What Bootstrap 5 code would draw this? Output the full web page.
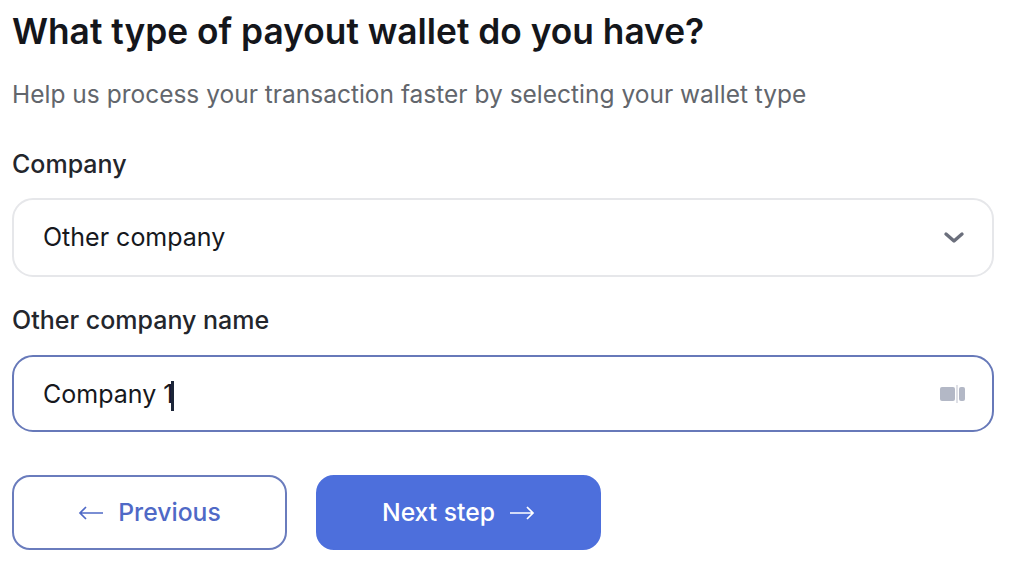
<!DOCTYPE html>
<html lang="en">
<head>
<meta charset="utf-8">
<title>Payout wallet</title>
<link href="https://cdn.jsdelivr.net/npm/bootstrap@5.3.0/dist/css/bootstrap.min.css" rel="stylesheet">
<style>
html,body{height:100%;overflow:hidden}
body{font-family:Inter,"Liberation Sans",sans-serif;background:#fff;color:#15171c}
.pagewrap{padding:11px 30px 0 12px}
.ttl{font-size:35.3px;line-height:42px;font-weight:600;color:#14161b;margin:0}
.sub{font-size:24.5px;line-height:32px;color:#62666c;margin:25px 0 0;font-weight:400}
.fld{font-size:25px;line-height:32px;font-weight:500;color:#23262c;margin:0}
.lab1{margin-top:38px}
.lab2{margin-top:27px}
.boxa,.boxb{background:#fff;border-radius:21px;padding:0 27px 0 29px;font-size:25px;color:#16181d}
.boxa{height:79px;border:2px solid #e6e7ea;margin-top:18px}
.boxb{height:77px;border:2px solid #6779b9;margin-top:19px}
.typed{padding-top:2px}
.caret{display:inline-block;width:3px;height:30px;background:#1c2538;margin-left:-2px}
.actions{margin-top:43px;gap:29px}
.act{width:275px;height:75px;border-radius:18px;font-size:24.7px;font-weight:550;gap:14px;padding:0;border-width:2px;border-style:solid}
.act-out{background:#fff;border-color:#6a7cbd;color:#4f69c6}
.act-fill{width:285px;background:#4d6fdc;border-color:#4d6fdc;color:#fff}
.act-out:hover{background:#fff;border-color:#6a7cbd;color:#4f69c6}
.act-fill:hover{background:#4d6fdc;border-color:#4d6fdc;color:#fff}
</style>
</head>
<body>
<main class="pagewrap">
<h1 class="ttl">What type of payout wallet do you have?</h1>
<p class="sub">Help us process your transaction faster by selecting your wallet type</p>
<form>
<div class="fld lab1">Company</div>
<div class="boxa d-flex align-items-center justify-content-between">
<span>Other company</span>
<svg width="22" height="14" viewBox="0 0 22 14" aria-hidden="true"><path d="M3 3l8 7 8-7" fill="none" stroke="#6b6f7c" stroke-width="3.4" stroke-linecap="round" stroke-linejoin="round"/></svg>
</div>
<div class="fld lab2">Other company name</div>
<div class="boxb d-flex align-items-center justify-content-between">
<span class="typed">Company 1<span class="caret align-middle"></span></span>
<svg width="25" height="18" viewBox="0 0 25 18" aria-hidden="true"><rect x="0" y="2" width="15" height="14" rx="2" fill="#b3b8c6"/><rect x="19" y="2" width="6" height="14" rx="2" fill="#b3b8c6"/><path d="M17 0v18" stroke="#c9ccd6" stroke-width="1.2"/></svg>
</div>
<div class="actions d-flex">
<button type="button" class="btn act act-out d-flex align-items-center justify-content-center">
<svg width="26" height="18" viewBox="0 0 26 18" aria-hidden="true"><path d="M25 9H2M8 3L2 9l6 6" fill="none" stroke="#4f69c6" stroke-width="1.7"/></svg>
<span>Previous</span>
</button>
<button type="button" class="btn act act-fill d-flex align-items-center justify-content-center">
<span>Next step</span>
<svg width="26" height="18" viewBox="0 0 26 18" aria-hidden="true"><path d="M1 9h23M18 3l6 6-6 6" fill="none" stroke="#fff" stroke-width="1.7"/></svg>
</button>
</div>
</form>
</main>
</body>
</html>
